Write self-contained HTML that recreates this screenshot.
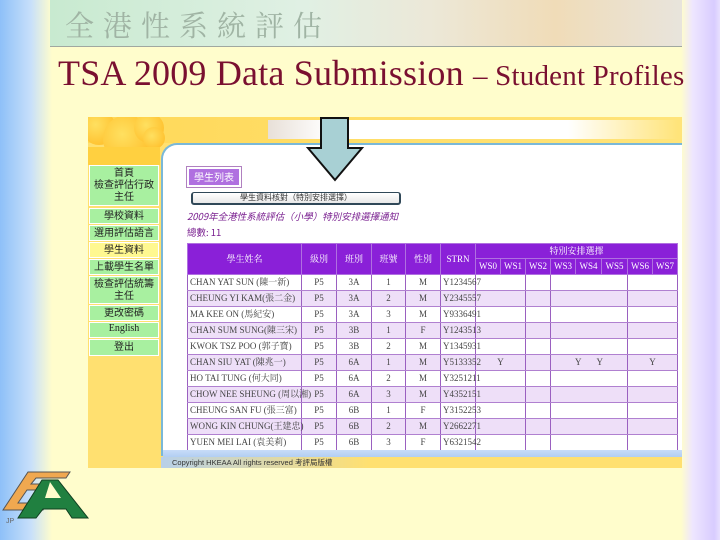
<!DOCTYPE html>
<html><head><meta charset="utf-8">
<style>
*{margin:0;padding:0;box-sizing:border-box}
body{width:720px;height:540px;overflow:hidden;position:relative;background:#fffdcc;font-family:"Liberation Serif","Noto Serif CJK SC",serif}
.abs{position:absolute}
#left{left:0;top:0;width:52px;height:540px;background:linear-gradient(90deg,#8ec0f8,#c8e0fa 60%,#fffdcc)}
#right{left:681px;top:0;width:39px;height:540px;background:linear-gradient(90deg,#fffdcc,#eee6ff 30%,#d8ccff 85%,#e8e0ff)}
#banner{left:50px;top:0;width:632px;height:47px;background:linear-gradient(90deg,#c8ead0,#e0f0e4 40%,#ece8d8 60%,#f0dcb8 80%,#e8e4dc);border-bottom:1px solid #a0a8a0}
#banner span{position:absolute;left:15px;top:4px;font-family:"Noto Serif CJK SC",serif;font-size:29px;letter-spacing:9px;color:#a0b4a4}
#title{left:58px;top:52px;font-size:36px;color:#7a1030;white-space:nowrap;letter-spacing:0.2px}
#title small{font-size:29px}
#shot{left:88px;top:117px;width:594px;height:351px;background:#ffe070;overflow:hidden}
.bub{position:absolute;border-radius:50%;background:radial-gradient(circle at 40% 40%,#ffe060,#ffb820)}
.menu{position:absolute;left:1px;width:70px;background:#a8f0a0;border:1px solid #fff;font-family:"Noto Sans CJK SC",sans-serif;font-size:10px;line-height:12px;text-align:center;color:#222}
#panel{left:73px;top:26px;width:530px;height:313px;background:#fff;border-top-left-radius:16px;border:2px solid #7ab8d8;border-right:none;border-bottom:none}
table{border-collapse:collapse;font-size:9px;color:#444}
td,th{border-left:1px solid #9a60c0;border-right:1px solid #9a60c0;height:16px;line-height:11px;padding:0 2px;text-align:center;font-weight:normal;white-space:nowrap}
th{background:#8a20d8;color:#fff;border:1px solid #b070e0}
tr.a td{background:#eedff8}
td{border-bottom:1px solid #b080d0}
td.n{text-align:left}
</style></head><body>
<div class="abs" id="left"></div>
<div class="abs" id="right"></div>
<div class="abs" id="banner"><span>全港性系統評估</span></div>
<div class="abs" id="title">TSA 2009 Data Submission <small>– Student Profiles</small></div>
<div class="abs" id="shot">
 <div class="abs" style="left:0;top:0;width:594px;height:26px;background:linear-gradient(90deg,#ffd858,#ffe47a)"></div>
 <div class="bub" style="left:-6px;top:-6px;width:34px;height:34px"></div>
 <div class="bub" style="left:15px;top:-2px;width:48px;height:48px"></div>
 <div class="bub" style="left:46px;top:-4px;width:30px;height:30px"></div>
 <div class="bub" style="left:55px;top:10px;width:22px;height:22px"></div>
 <div class="abs" style="left:0;top:30px;width:72px;height:18px;background:#ffd040"></div>
 <div class="abs" style="left:180px;top:3px;width:300px;height:19px;background:linear-gradient(90deg,#e8e0d8,#fff 20%,#fff)"></div>
 <div class="abs" style="left:480px;top:3px;width:110px;height:19px;background:linear-gradient(90deg,#fff,#ffe47a)"></div>
 <div class="menu" style="top:48px;height:41px">首頁<br>檢查評估行政主任</div>
 <div class="menu" style="top:91px;height:16px">學校資料</div>
 <div class="menu" style="top:108px;height:16px">選用評估語言</div>
 <div class="menu" style="top:125px;height:16px;background:#fff890">學生資料</div>
 <div class="menu" style="top:142px;height:16px">上載學生名單</div>
 <div class="menu" style="top:159px;height:28px">檢查評估統籌主任</div>
 <div class="menu" style="top:188px;height:16px">更改密碼</div>
 <div class="menu" style="top:205px;height:16px;font-family:'Liberation Serif',serif">English</div>
 <div class="menu" style="top:222px;height:17px">登出</div>
 <div class="abs" id="panel">
  <div class="abs" style="left:23px;top:21px;width:56px;height:22px;border:1px solid #b080c0;padding:2px"><div style="background:#b070e0;height:16px;font-family:'Noto Sans CJK SC',sans-serif;font-size:10px;color:#fff;text-align:center;line-height:16px">學生列表</div></div>
  <div class="abs" style="left:28px;top:47px;width:210px;height:13px;border:2px solid #304858;border-top-width:1px;border-radius:3px;background:linear-gradient(#fff,#e8e8e8);font-family:'Noto Sans CJK SC',sans-serif;font-size:8px;text-align:center;line-height:10px;color:#333">學生資料核對（特別安排選擇）</div>
  <div class="abs" style="left:24px;top:64px;font-family:'Noto Sans CJK SC',sans-serif;font-size:9.5px;font-style:italic;color:#7a2090">2009年全港性系統評估（小學）特別安排選擇通知</div>
  <div class="abs" style="left:24px;top:80px;font-family:'Noto Sans CJK SC',sans-serif;font-size:9.5px;color:#7a2090">總數: 11</div>
  <table class="abs" style="left:24px;top:98px;width:490px;table-layout:fixed">
   <colgroup><col style="width:114px"><col style="width:35px"><col style="width:35px"><col style="width:34px"><col style="width:35px"><col style="width:35px"><col style="width:25px"><col style="width:25px"><col style="width:25px"><col style="width:25px"><col style="width:26px"><col style="width:26px"><col style="width:25px"><col style="width:25px"></colgroup>
   <tr><th rowspan="2" style="height:29px">學生姓名</th><th rowspan="2">級別</th><th rowspan="2">班別</th><th rowspan="2">班號</th><th rowspan="2">性別</th><th rowspan="2">STRN</th><th colspan="8" style="height:15px">特別安排選擇</th></tr>
   <tr><th style="height:13px">WS0</th><th>WS1</th><th>WS2</th><th>WS3</th><th>WS4</th><th>WS5</th><th>WS6</th><th>WS7</th></tr>
   <tr><td class="n">CHAN YAT SUN (陳一新)</td><td>P5</td><td>3A</td><td>1</td><td>M</td><td>Y1234567</td><td colspan="2"></td><td></td><td colspan="3"></td><td colspan="2"></td></tr>
   <tr class="a"><td class="n">CHEUNG YI KAM(張二金)</td><td>P5</td><td>3A</td><td>2</td><td>M</td><td>Y2345557</td><td colspan="2"></td><td></td><td colspan="3"></td><td colspan="2"></td></tr>
   <tr><td class="n">MA KEE ON (馬紀安)</td><td>P5</td><td>3A</td><td>3</td><td>M</td><td>Y9336491</td><td colspan="2"></td><td></td><td colspan="3"></td><td colspan="2"></td></tr>
   <tr class="a"><td class="n">CHAN SUM SUNG(陳三宋)</td><td>P5</td><td>3B</td><td>1</td><td>F</td><td>Y1243513</td><td colspan="2"></td><td></td><td colspan="3"></td><td colspan="2"></td></tr>
   <tr><td class="n">KWOK TSZ POO (郭子寶)</td><td>P5</td><td>3B</td><td>2</td><td>M</td><td>Y1345931</td><td colspan="2"></td><td></td><td colspan="3"></td><td colspan="2"></td></tr>
   <tr class="a"><td class="n">CHAN SIU YAT (陳兆一)</td><td>P5</td><td>6A</td><td>1</td><td>M</td><td>Y5133352</td><td colspan="2">Y</td><td></td><td colspan="3">Y &nbsp; &nbsp; &nbsp; Y</td><td colspan="2">Y</td></tr>
   <tr><td class="n">HO TAI TUNG (何大同)</td><td>P5</td><td>6A</td><td>2</td><td>M</td><td>Y3251211</td><td colspan="2"></td><td></td><td colspan="3"></td><td colspan="2"></td></tr>
   <tr class="a"><td class="n">CHOW NEE SHEUNG (周以湘)</td><td>P5</td><td>6A</td><td>3</td><td>M</td><td>Y4352151</td><td colspan="2"></td><td></td><td colspan="3"></td><td colspan="2"></td></tr>
   <tr><td class="n">CHEUNG SAN FU (張三富)</td><td>P5</td><td>6B</td><td>1</td><td>F</td><td>Y3152253</td><td colspan="2"></td><td></td><td colspan="3"></td><td colspan="2"></td></tr>
   <tr class="a"><td class="n">WONG KIN CHUNG(王建忠)</td><td>P5</td><td>6B</td><td>2</td><td>M</td><td>Y2662271</td><td colspan="2"></td><td></td><td colspan="3"></td><td colspan="2"></td></tr>
   <tr><td class="n">YUEN MEI LAI (袁美莉)</td><td>P5</td><td>6B</td><td>3</td><td>F</td><td>Y6321542</td><td colspan="2"></td><td></td><td colspan="3"></td><td colspan="2"></td></tr>
  </table>
  <div class="abs" style="left:0;top:305px;width:530px;height:10px;background:linear-gradient(#c8dcf8,#a8c8f0)"></div>
 </div>
 <div class="abs" style="left:73px;top:340px;width:521px;height:11px;background:linear-gradient(90deg,#b8d0e8,#ffe070 40%)"></div>
 <div class="abs" style="left:84px;top:340px;font-family:'Liberation Sans','Noto Sans CJK SC',sans-serif;font-size:7.5px;color:#333">Copyright HKEAA All rights reserved 考評局版權</div>
</div>
<svg class="abs" style="left:0;top:60px" width="720" height="130">
 <polygon points="321,58 348,58 348,88 362,88 335,120 308,88 321,88" fill="#a8d0d4" stroke="#111" stroke-width="2"/>
</svg>
<svg class="abs" style="left:0;top:468px" width="95" height="60">
 <polygon points="28,4 70,4 66,10 36,10 31,16 55,16 51,22 27,22 18,35 48,35 43,42 3,42" fill="#f0a850" stroke="#555" stroke-width="1"/>
 <polygon points="42,12 58,12 88,50 72,50 66,41 43,41 36,50 18,50" fill="#208040" stroke="#104020" stroke-width="1"/>
 <polygon points="50,14 61,30 45,30" fill="#fffdcc"/>
 <text x="6" y="55" font-size="7" fill="#666" font-family="Liberation Sans,sans-serif">JP</text>
</svg>
</body></html>
